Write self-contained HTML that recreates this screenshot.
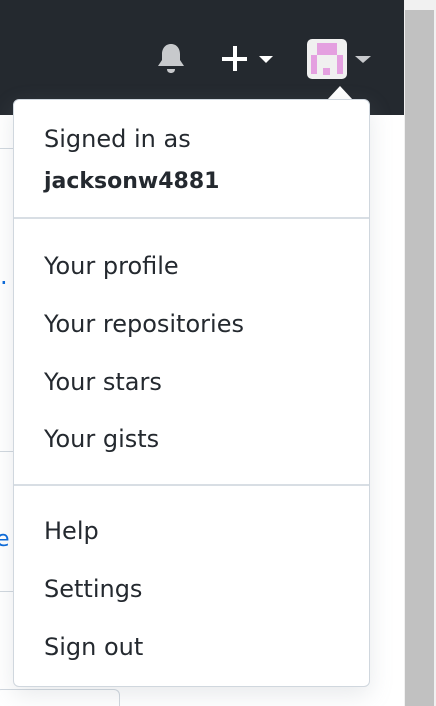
<!DOCTYPE html><html style="height:706px;overflow:hidden"><head><style>
body{margin:0;width:436px;height:706px;overflow:hidden;background:#fff;font-family:"DejaVu Sans","Liberation Sans",sans-serif;position:relative}
.hdr{position:absolute;left:0;top:0;width:404px;height:115px;background:#24292f}
.sb{position:absolute;left:404px;top:0;width:32px;height:706px;background:#f1f1f1}
.thumb{position:absolute;left:405px;top:10px;width:29px;height:696px;background:#c1c1c1}
.ln{position:absolute;left:0;width:13px;height:1px;background:#d0d7de}
.dd{position:absolute;left:13px;top:99px;width:355px;height:586px;background:#fff;border:1px solid #d0d7de;border-radius:6px;box-shadow:0 8px 24px rgba(140,149,159,.2);color:#24292f;font-size:24px}
.t{position:absolute;left:30px;white-space:nowrap}
.sep{position:absolute;left:0;right:0;height:2px;background:#d8dee4}
</style></head><body>
<div class="hdr"></div>
<div class="sb"></div><div class="thumb"></div>
<div class="ln" style="top:148px"></div><div class="ln" style="top:451px"></div><div class="ln" style="top:591px"></div>
<div style="position:absolute;left:0;top:262px;color:#0969da;font-size:24px">.</div>
<div style="position:absolute;left:-4px;top:527px;color:#0969da;font-size:22px">e</div>
<div style="position:absolute;left:-5px;top:689px;width:123px;height:16px;border:1px solid #d0d7de;border-bottom:none;border-radius:6px 6px 0 0"></div>
<svg style="position:absolute;left:155px;top:42px" width="32" height="34" viewBox="0 0 32 34"><path d="M16 2c-6 0-9 5-9 10v6l-4 6h26l-4-6v-6c0-5-3-10-9-10z" fill="#c7c9cc"/><path d="M12 27h8c0 3-2 4-4 4s-4-1-4-4z" fill="#c7c9cc"/></svg>
<div style="position:absolute;left:222px;top:57px;width:25px;height:4px;background:#fff"></div>
<div style="position:absolute;left:233px;top:46px;width:4px;height:25px;background:#fff"></div>
<div style="position:absolute;left:259px;top:56px;border-left:7px solid transparent;border-right:7px solid transparent;border-top:7px solid #fff"></div>
<div style="position:absolute;left:307px;top:39px;width:40px;height:40px;background:#f0f0f0;border-radius:5px;overflow:hidden">
<div style="position:absolute;left:10px;top:4px;width:20px;height:12px;background:#e4a0e0"></div>
<div style="position:absolute;left:4px;top:16px;width:6px;height:19px;background:#e4a0e0"></div>
<div style="position:absolute;left:30px;top:16px;width:6px;height:19px;background:#e4a0e0"></div>
<div style="position:absolute;left:16px;top:29px;width:7px;height:7px;background:#e4a0e0"></div></div>
<div style="position:absolute;left:355px;top:56px;border-left:8px solid transparent;border-right:8px solid transparent;border-top:7px solid #c7c9cc"></div>
<div style="position:absolute;left:327px;top:86px;border-left:13px solid transparent;border-right:13px solid transparent;border-bottom:14px solid #fff"></div>
<div class="dd">
<div class="t" style="top:25px">Signed in as</div>
<div class="t" style="top:69px;font-weight:bold;font-size:22px">jacksonw4881</div>
<div class="sep" style="top:117px"></div>
<div class="t" style="top:152px">Your profile</div>
<div class="t" style="top:210px">Your repositories</div>
<div class="t" style="top:268px">Your stars</div>
<div class="t" style="top:325px">Your gists</div>
<div class="sep" style="top:384px"></div>
<div class="t" style="top:417px">Help</div>
<div class="t" style="top:475px">Settings</div>
<div class="t" style="top:533px">Sign out</div>
</div>
</body></html>
